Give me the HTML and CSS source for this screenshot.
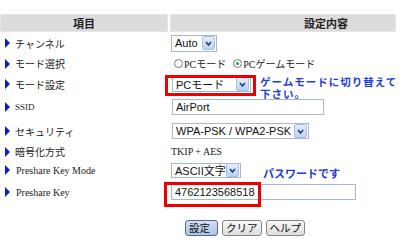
FILE: index.html
```html
<!DOCTYPE html>
<html lang="ja">
<head>
  <meta charset="UTF-8">
  <title>無線設定</title>
  <link rel="stylesheet" href="styles.css">
</head>
<body>
  <div class="settings">
    <div class="row head">
      <div class="cell label">項目</div>
      <div class="cell value">設定内容</div>
    </div>

    <div class="row r-channel">
      <div class="cell label"><span class="arrow"></span>チャンネル</div>
      <div class="cell value">
        <span class="select w-auto"><span class="sel-text">Auto</span><span class="sel-btn"><svg width="7" height="5" viewBox="0 0 7 5"><path d="M1 1 L3.5 4 L6 1" fill="none" stroke="#1d3c8c" stroke-width="1.6"/></svg></span></span>
      </div>
    </div>

    <div class="row r-mode">
      <div class="cell label"><span class="arrow"></span>モード選択</div>
      <div class="cell value">
        <span class="radio"></span><span class="rlabel"><span class="serif">PC</span>モード</span>
        <span class="radio checked"></span><span class="rlabel"><span class="serif">PC</span>ゲームモード</span>
      </div>
    </div>

    <div class="row r-modeset">
      <div class="cell label"><span class="arrow"></span>モード設定</div>
      <div class="cell value">
        <span class="select w-mode"><span class="sel-text">PCモード</span><span class="sel-btn"><svg width="7" height="5" viewBox="0 0 7 5"><path d="M1 1 L3.5 4 L6 1" fill="none" stroke="#1d3c8c" stroke-width="1.6"/></svg></span></span>
        <span class="redbox box-mode"></span>
        <span class="note note-mode"><span class="line">ゲームモードに切り替えて</span><span class="line">下さい。</span></span>
      </div>
    </div>

    <div class="row r-ssid">
      <div class="cell label"><span class="arrow"></span><span class="serif small">SSID</span></div>
      <div class="cell value">
        <span class="input w-ssid">AirPort</span>
      </div>
    </div>

    <div class="row r-sec">
      <div class="cell label"><span class="arrow"></span>セキュリティ</div>
      <div class="cell value">
        <span class="select w-sec"><span class="sel-text">WPA-PSK / WPA2-PSK</span><span class="sel-btn"><svg width="7" height="5" viewBox="0 0 7 5"><path d="M1 1 L3.5 4 L6 1" fill="none" stroke="#1d3c8c" stroke-width="1.6"/></svg></span></span>
      </div>
    </div>

    <div class="row r-enc">
      <div class="cell label sub1"><span class="arrow"></span>暗号化方式</div>
      <div class="cell value plain"><span class="serif">TKIP + AES</span></div>
    </div>

    <div class="row r-keymode">
      <div class="cell label sub2"><span class="arrow"></span><span class="serif">Preshare Key Mode</span></div>
      <div class="cell value">
        <span class="select w-ascii"><span class="sel-text">ASCII文字</span><span class="sel-btn"><svg width="7" height="5" viewBox="0 0 7 5"><path d="M1 1 L3.5 4 L6 1" fill="none" stroke="#1d3c8c" stroke-width="1.6"/></svg></span></span>
        <span class="note note-pass">パスワードです</span>
      </div>
    </div>

    <div class="row r-key">
      <div class="cell label sub2"><span class="arrow"></span><span class="serif">Preshare Key</span></div>
      <div class="cell value">
        <span class="input w-key">4762123568518</span>
        <span class="redbox box-key"></span>
      </div>
    </div>

    <div class="buttons">
      <span class="btn focus">設定</span>
      <span class="btn">クリア</span>
      <span class="btn">ヘルプ</span>
    </div>
  </div>
</body>
</html>
```

FILE: styles.css
```css
body {
  margin: 0;
  background: #fff;
  font-family: "Noto Sans CJK JP", sans-serif;
  color: #222;
}

.settings {
  padding-top: 14px;
  width: 400px;
}

.row {
  display: flex;
  align-items: center;
}

.cell.label {
  width: 168px;
  flex: none;
  display: flex;
  align-items: center;
  font-size: 10px;
  padding-left: 5px;
  box-sizing: border-box;
}

.cell.value {
  position: relative;
  flex: 1;
  margin-left: 2px;
  padding-left: 1px;
  display: flex;
  align-items: center;
}

.head {
  height: 18px;
  align-items: stretch;
}

.head .cell {
  background: #dcdcdc;
  border: 1px dotted #efefef;
  box-sizing: border-box;
  font-weight: bold;
  font-size: 11px;
  justify-content: center;
}

.head .cell.label {
  padding-left: 0;
}

.head .cell.value {
  flex: none;
  width: 226px;
  justify-content: flex-start;
  padding-left: 133px;
}

.arrow {
  width: 0;
  height: 0;
  border-top: 5px solid transparent;
  border-bottom: 5px solid transparent;
  border-left: 5px solid #0a1ad0;
  margin-right: 5px;
}

.sub1 { padding-left: 13px; }
.sub2 { padding-left: 16px; }
.sub2 .arrow { margin-right: 6px; }

.serif {
  font-family: "Liberation Serif", serif;
  font-size: 10px;
}

.serif.small {
  font-size: 9px;
}

/* row heights */
.r-channel { height: 22px; }
.r-mode { height: 19px; }
.r-modeset { height: 22px; }
.r-ssid { height: 24px; }
.r-sec { height: 24px; }
.r-enc { height: 17px; }
.r-keymode { height: 20px; }
.r-key { height: 24px; }

/* fake form controls */
.select,
.input {
  display: inline-flex;
  align-items: center;
  box-sizing: border-box;
  height: 16px;
  border: 1px solid #a7b8d2;
  background: #fff;
  font-family: "Liberation Sans", Arial, "Noto Sans CJK JP", sans-serif;
  font-size: 11px;
  color: #111;
  padding-left: 3px;
}

.sel-text {
  flex: 1;
  white-space: nowrap;
}

.sel-btn {
  width: 11px;
  height: 12px;
  margin-right: 1px;
  border: 1px solid #a9c0e2;
  border-radius: 2px;
  background: linear-gradient(#e3edfb, #bcd2f1);
  display: flex;
  align-items: center;
  justify-content: center;
}

.w-auto { width: 46px; height: 17px; }
.w-mode { width: 79px; height: 15px; margin-left: 1px; }
.w-sec { width: 137px; margin-left: 1px; }
.w-ascii { width: 70px; height: 15px; }
.w-ssid { width: 152px; margin-left: 1px; }
.w-key { width: 185px; }

.radio {
  width: 7px;
  height: 7px;
  border: 1px solid #6a7890;
  border-radius: 50%;
  background: #fff;
  margin-left: 3px;
  margin-right: 1px;
  display: inline-flex;
  align-items: center;
  justify-content: center;
}

.radio.checked::after {
  content: "";
  width: 3px;
  height: 3px;
  border-radius: 50%;
  background: #2a9a2a;
}

.rlabel {
  font-size: 10px;
  margin-right: 4px;
}

.plain {
  font-size: 10px;
}

.redbox {
  position: absolute;
  border: 3px solid #ee0000;
  box-sizing: border-box;
}

.box-mode {
  left: -5px;
  top: -2px;
  width: 91px;
  height: 21px;
}

.box-key {
  left: -6px;
  top: -2px;
  width: 97px;
  height: 25px;
}

.note {
  color: #1e3cd6;
  font-weight: bold;
  font-size: 11.5px;
}

.note-mode {
  position: absolute;
  left: 90px;
  top: -1px;
  font-size: 10.5px;
  letter-spacing: 1px;
  white-space: nowrap;
}

.note-mode .line {
  display: block;
  height: 12px;
  line-height: 12px;
}

.note-pass {
  font-size: 11px;
  margin-left: 22px;
  margin-top: 6px;
}

.buttons {
  display: flex;
  gap: 4px;
  padding-top: 16px;
  padding-left: 185px;
}

.btn {
  box-sizing: border-box;
  height: 16px;
  padding: 0 3px;
  border: 1px solid #7d8793;
  border-radius: 3px;
  background: linear-gradient(#f6f6f6, #dedede);
  font-size: 10.5px;
  line-height: 14px;
  color: #111;
}

.btn.focus {
  background: linear-gradient(#d2def2, #aec3e6);
  border-color: #4f6a98;
  width: 33px;
}
```
